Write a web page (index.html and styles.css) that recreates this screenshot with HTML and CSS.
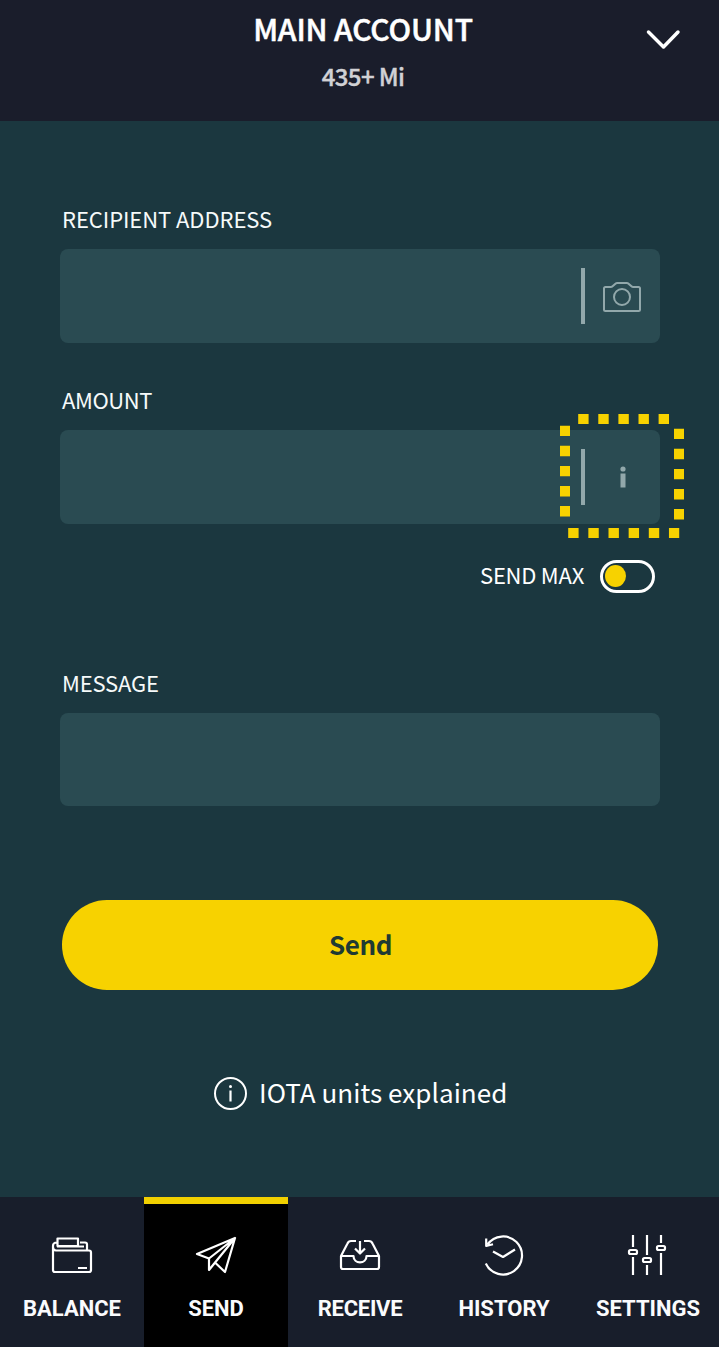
FILE: index.html
```html
<!DOCTYPE html>
<html lang="en">
<head>
<meta charset="utf-8">
<title>Send</title>
<link rel="stylesheet" href="styles.css">
</head>
<body>
<div class="app">
  <header class="header">
    <h1 class="account">MAIN ACCOUNT</h1>
    <p class="funds">435+ Mi</p>
    <svg class="chevron" width="36" height="22" viewBox="0 0 36 22"><path d="M3.500 4L18.500 19L33 4"/></svg>
  </header>
  <main class="form">
    <label class="label"><span class="t-recipient">RECIPIENT ADDRESS</span></label>
    <div class="field">
      <span class="divider"></span>
      <svg class="camera" width="40" height="32" viewBox="602 281 40 32"><path d="M605.500 287h5.500c2 0 4-4 6-4h10c2 0 4 4 6 4h5.500q1.500 0 1.500 1.500v21q0 1.500-1.500 1.500h-33q-1.500 0-1.500-1.500v-21q0-1.500 1.500-1.500z"/><circle cx="622" cy="297" r="8"/></svg>
    </div>
    <label class="label label-amount"><span class="t-amount">AMOUNT</span></label>
    <div class="field">
      <span class="divider"></span>
      <svg class="info" width="6" height="24" viewBox="0 0 6 24"><circle cx="3" cy="4" r="2.600"/><path d="M.5 8.500h5V22.500h-5z"/></svg>
      <svg class="highlight" width="124" height="124" viewBox="560 414 124 124">
        <path d="M578.200 419H670" stroke-dasharray="10.400 9.700"/>
        <path d="M565 425.700V517" stroke-dasharray="10.400 9.700"/>
        <path d="M679 428.700V520" stroke-dasharray="10.400 9.700"/>
        <path d="M568.200 533H679.200" stroke-dasharray="10.400 9.750"/>
      </svg>
    </div>
    <div class="max"><span class="t-max">SEND MAX</span><span class="toggle"><span class="knob"></span></span></div>
    <label class="label label-message"><span class="t-message">MESSAGE</span></label>
    <div class="field field-message"></div>
    <button class="send">Send</button>
    <div class="units">
      <svg width="34" height="34" viewBox="0 0 34 34"><circle class="ring" cx="17.500" cy="17.500" r="15.500"/><path class="stem" d="M17.500 14.500V25.500"/><circle class="dot" cx="17.500" cy="10.500" r="1.500"/></svg>
      <span class="t-units">IOTA units explained</span>
    </div>
  </main>
  <nav class="nav">
    <a class="tab">
      <svg width="44" height="44" viewBox="50 1233 44 44"><path d="M55 1250.500h34q2 0 2 2v17.500q0 2-2 2H55q-2 0-2-2V1246q0-3.500 4-3.500M53 1247q0 3.500 3 3.500M57.500 1238.500h20.500v7.500h-20.500zM80 1242.500h5q2 0 2 2v6M57 1246.500h27M78 1268h9"/></svg>
      <span class="t-balance">BALANCE</span>
    </a>
    <a class="tab active">
      <svg width="44" height="44" viewBox="194 1233 44 44"><path d="M235 1238L197 1254L209 1258.500zM235 1238L209 1258.500V1270L235 1238L225 1272L215.500 1263"/></svg>
      <span class="t-send">SEND</span>
    </a>
    <a class="tab">
      <svg width="44" height="44" viewBox="338 1233 44 44"><path d="M356 1241h-5q-2.500 0-3.500 2.500L341 1256V1267q0 2 2 2h34q2 0 2-2V1256L372.500 1243.500q-1-2.500-3.500-2.500h-5M341 1256h12.500c0 8.500 13 8.500 13 0H379M360 1241v12M355 1248.500l5 5l5-5"/></svg>
      <span class="t-receive">RECEIVE</span>
    </a>
    <a class="tab">
      <svg width="44" height="44" viewBox="482 1233 44 44"><path d="M485.800 1263.500A19 19 0 1 0 487.500 1244.500M486.200 1238.500V1246L493 1244.300M493 1251.500l10 5.500l12-7.500"/></svg>
      <span class="t-history">HISTORY</span>
    </a>
    <a class="tab">
      <svg width="44" height="44" viewBox="626 1233 44 44"><path d="M633 1235v12M633 1257v18M647 1235v20M647 1265v10M661 1235v8M661 1253v22"/><rect x="629" y="1250" width="8" height="4" rx="1.500"/><rect x="643" y="1258" width="8" height="4" rx="1.500"/><rect x="657" y="1246" width="8" height="4" rx="1.500"/></svg>
      <span class="t-settings">SETTINGS</span>
    </a>
  </nav>
</div>
</body>
</html>
```
FILE: styles.css
```css
* { box-sizing: border-box; margin: 0; padding: 0; }
body { background: #1b373f; color: #fff; font-family: "Noto Sans CJK SC", "Noto Sans", sans-serif; }
.app { width: 719px; height: 1347px; display: flex; flex-direction: column; overflow: hidden; }
.header { position: relative; height: 121px; background: #1a1d2b; text-align: center; padding: 8px 0 0 7px; }
.account { font-size: 30px; line-height: 40px; font-weight: 500; letter-spacing: -0.15px; -webkit-text-stroke: 0.5px #fff; }
.funds { font-size: 24px; line-height: 36px; margin-top: 10px; font-weight: 500; letter-spacing: -0.65px; color: #d1d1d5; -webkit-text-stroke: 0.4px #d1d1d5; }
.chevron { position: absolute; right: 38px; top: 28px; fill: none; stroke: #fff; stroke-width: 3.5; stroke-linecap: round; stroke-linejoin: round; }
.form { flex: 1; padding: 82px 59px 0 60px; }
.label { display: block; height: 46px; padding-left: 2px; font-size: 22px; line-height: 30px; color: #f6fafa; }
.t-recipient { letter-spacing: -0.07px; }
.t-amount { letter-spacing: -0.4px; }
.t-message { letter-spacing: -0.18px; }
.t-max { letter-spacing: -0.25px; margin-top: -1px; }
.field { position: relative; height: 94px; border-radius: 8px; background: #2a4b52; display: flex; align-items: center; }
.label-amount { margin-top: 41px; }
.divider { width: 4px; height: 56px; margin-left: 521px; background: #92a8ab; }
.camera { margin: 2px 0 0 17px; fill: none; stroke: #92a8ab; stroke-width: 2; }
.info { margin-left: 35px; fill: #92a8ab; }
.highlight { position: absolute; left: 500px; top: -16px; z-index: 1; fill: none; stroke: #f7d200; stroke-width: 10; }
.max { height: 33px; margin-top: 36px; padding-right: 5px; display: flex; justify-content: flex-end; font-size: 22px; line-height: 30px; }
.toggle { width: 55px; height: 33px; margin-left: 16px; padding: 2px; border: 3px solid #fff; border-radius: 17px; }
.knob { display: block; width: 21px; height: 22px; border-radius: 50%; background: #f7d200; }
.label-message { margin-top: 74px; }
.field-message { height: 93px; }
.send { display: block; width: 596px; height: 90px; margin: 94px 0 0 2px; padding: 0 0 3px 1px; border: 0; border-radius: 45px; background: #f7d200; color: #1f3a33; font: 700 26px/40px "Noto Sans CJK SC", "Noto Sans", sans-serif; letter-spacing: -0.4px; }
.units { margin: 86px 0 0 153px; display: flex; font-size: 26px; line-height: 32px; letter-spacing: 0.05px; }
.units span { margin-left: 12px; }
.ring { fill: none; stroke: #fff; stroke-width: 2; }
.stem { stroke: #fff; stroke-width: 2.2; }
.dot { fill: #fff; }
.nav { height: 150px; background: #181e2b; display: grid; grid-template-columns: repeat(5, 144px); }
.tab { display: flex; flex-direction: column; align-items: center; padding-top: 36px; font: 700 22px/30px Roboto, sans-serif; color: #fafbfd; }
.tab svg { fill: none; stroke: #fff; stroke-width: 2.2; margin-bottom: 17px; stroke-linejoin: round; }
.t-receive { letter-spacing: -0.25px; }
.active { background: #000; border-top: 7px solid #f1d000; padding-top: 29px; }
.tab span, .t-units, .t-max { white-space: nowrap; }
```
